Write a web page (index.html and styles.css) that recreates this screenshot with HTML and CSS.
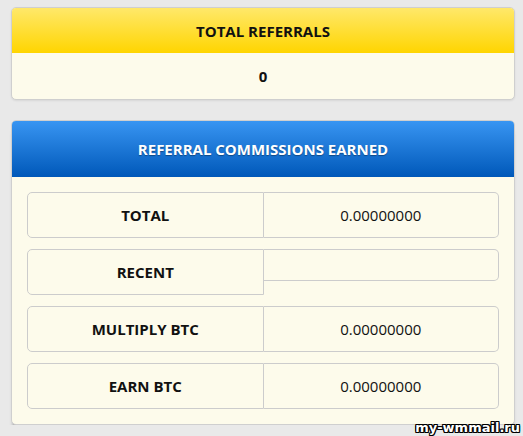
FILE: index.html
```html
<!DOCTYPE html>
<html lang="en">
<head>
  <meta charset="utf-8">
  <title>Referrals</title>
  <link rel="stylesheet" href="styles.css">
</head>
<body>
  <div class="page">
    <div class="box">
      <div class="box-head yellow-head">TOTAL REFERRALS</div>
      <div class="box-body count">0</div>
    </div>

    <div class="box commissions">
      <div class="box-head blue-head">REFERRAL COMMISSIONS EARNED</div>
      <div class="box-body stats">
        <div class="stat-row">
          <div class="stat-label">TOTAL</div>
          <div class="stat-value">0.00000000</div>
        </div>
        <div class="stat-row">
          <div class="stat-label">RECENT</div>
          <div class="stat-value empty"></div>
        </div>
        <div class="stat-row">
          <div class="stat-label">MULTIPLY BTC</div>
          <div class="stat-value">0.00000000</div>
        </div>
        <div class="stat-row">
          <div class="stat-label">EARN BTC</div>
          <div class="stat-value">0.00000000</div>
        </div>
      </div>
    </div>
  </div>
  <div class="watermark">my-wmmail.ru</div>
</body>
</html>
```

FILE: styles.css
```css
body {
  margin: 0;
  background-color: #e9e9e9;
  font-family: "Open Sans", "DejaVu Sans", sans-serif;
  font-size: 15px;
  color: #111;
}
.page {
  padding: 7px 8px 0 11px;
}
.box {
  border: 1px solid #cfcfcf;
  border-radius: 5px;
  background-color: #fdfbeb;
  box-shadow: 0 1px 2px rgba(0, 0, 0, 0.08);
  overflow: hidden;
}
.box-head {
  text-align: center;
  font-weight: bold;
}
.yellow-head {
  height: 45px;
  line-height: 46px;
  background: linear-gradient(#ffe86a, #ffd500);
}
.blue-head {
  height: 56px;
  line-height: 56px;
  color: #fff;
  text-shadow: 0 1px 1px rgba(0, 0, 0, 0.35);
  background: linear-gradient(#3895f2, #0058b9);
}
.count {
  height: 46px;
  line-height: 46px;
  text-align: center;
  font-weight: bold;
}
.commissions {
  margin-top: 20px;
  box-shadow: 0 9px 5px -4px #3a3a3a;
}
.stats {
  padding: 15px 15px 15px 15px;
  display: flex;
  flex-direction: column;
  gap: 11px;
}
.stat-row {
  display: flex;
  align-items: flex-start;
}
.stat-label {
  flex: 1;
  height: 44px;
  line-height: 45px;
  text-align: center;
  font-weight: bold;
  border: 1px solid #cccccc;
  border-radius: 5px 0 0 5px;
}
.stat-value {
  flex: 1;
  height: 44px;
  line-height: 45px;
  text-align: center;
  border: 1px solid #cccccc;
  border-left: none;
  border-radius: 0 5px 5px 0;
}
.stat-value.empty {
  height: 30px;
}
.watermark {
  position: absolute;
  right: 3px;
  bottom: 0;
  font-family: "DejaVu Sans", sans-serif;
  font-weight: bold;
  font-size: 13px;
  line-height: 17px;
  color: #fff;
  text-shadow: 1px 0 0 #000, -1px 0 0 #000, 0 1px 0 #000, 0 -1px 0 #000,
    1px 1px 0 #000, -1px -1px 0 #000, 1px -1px 0 #000, -1px 1px 0 #000;
}
```
